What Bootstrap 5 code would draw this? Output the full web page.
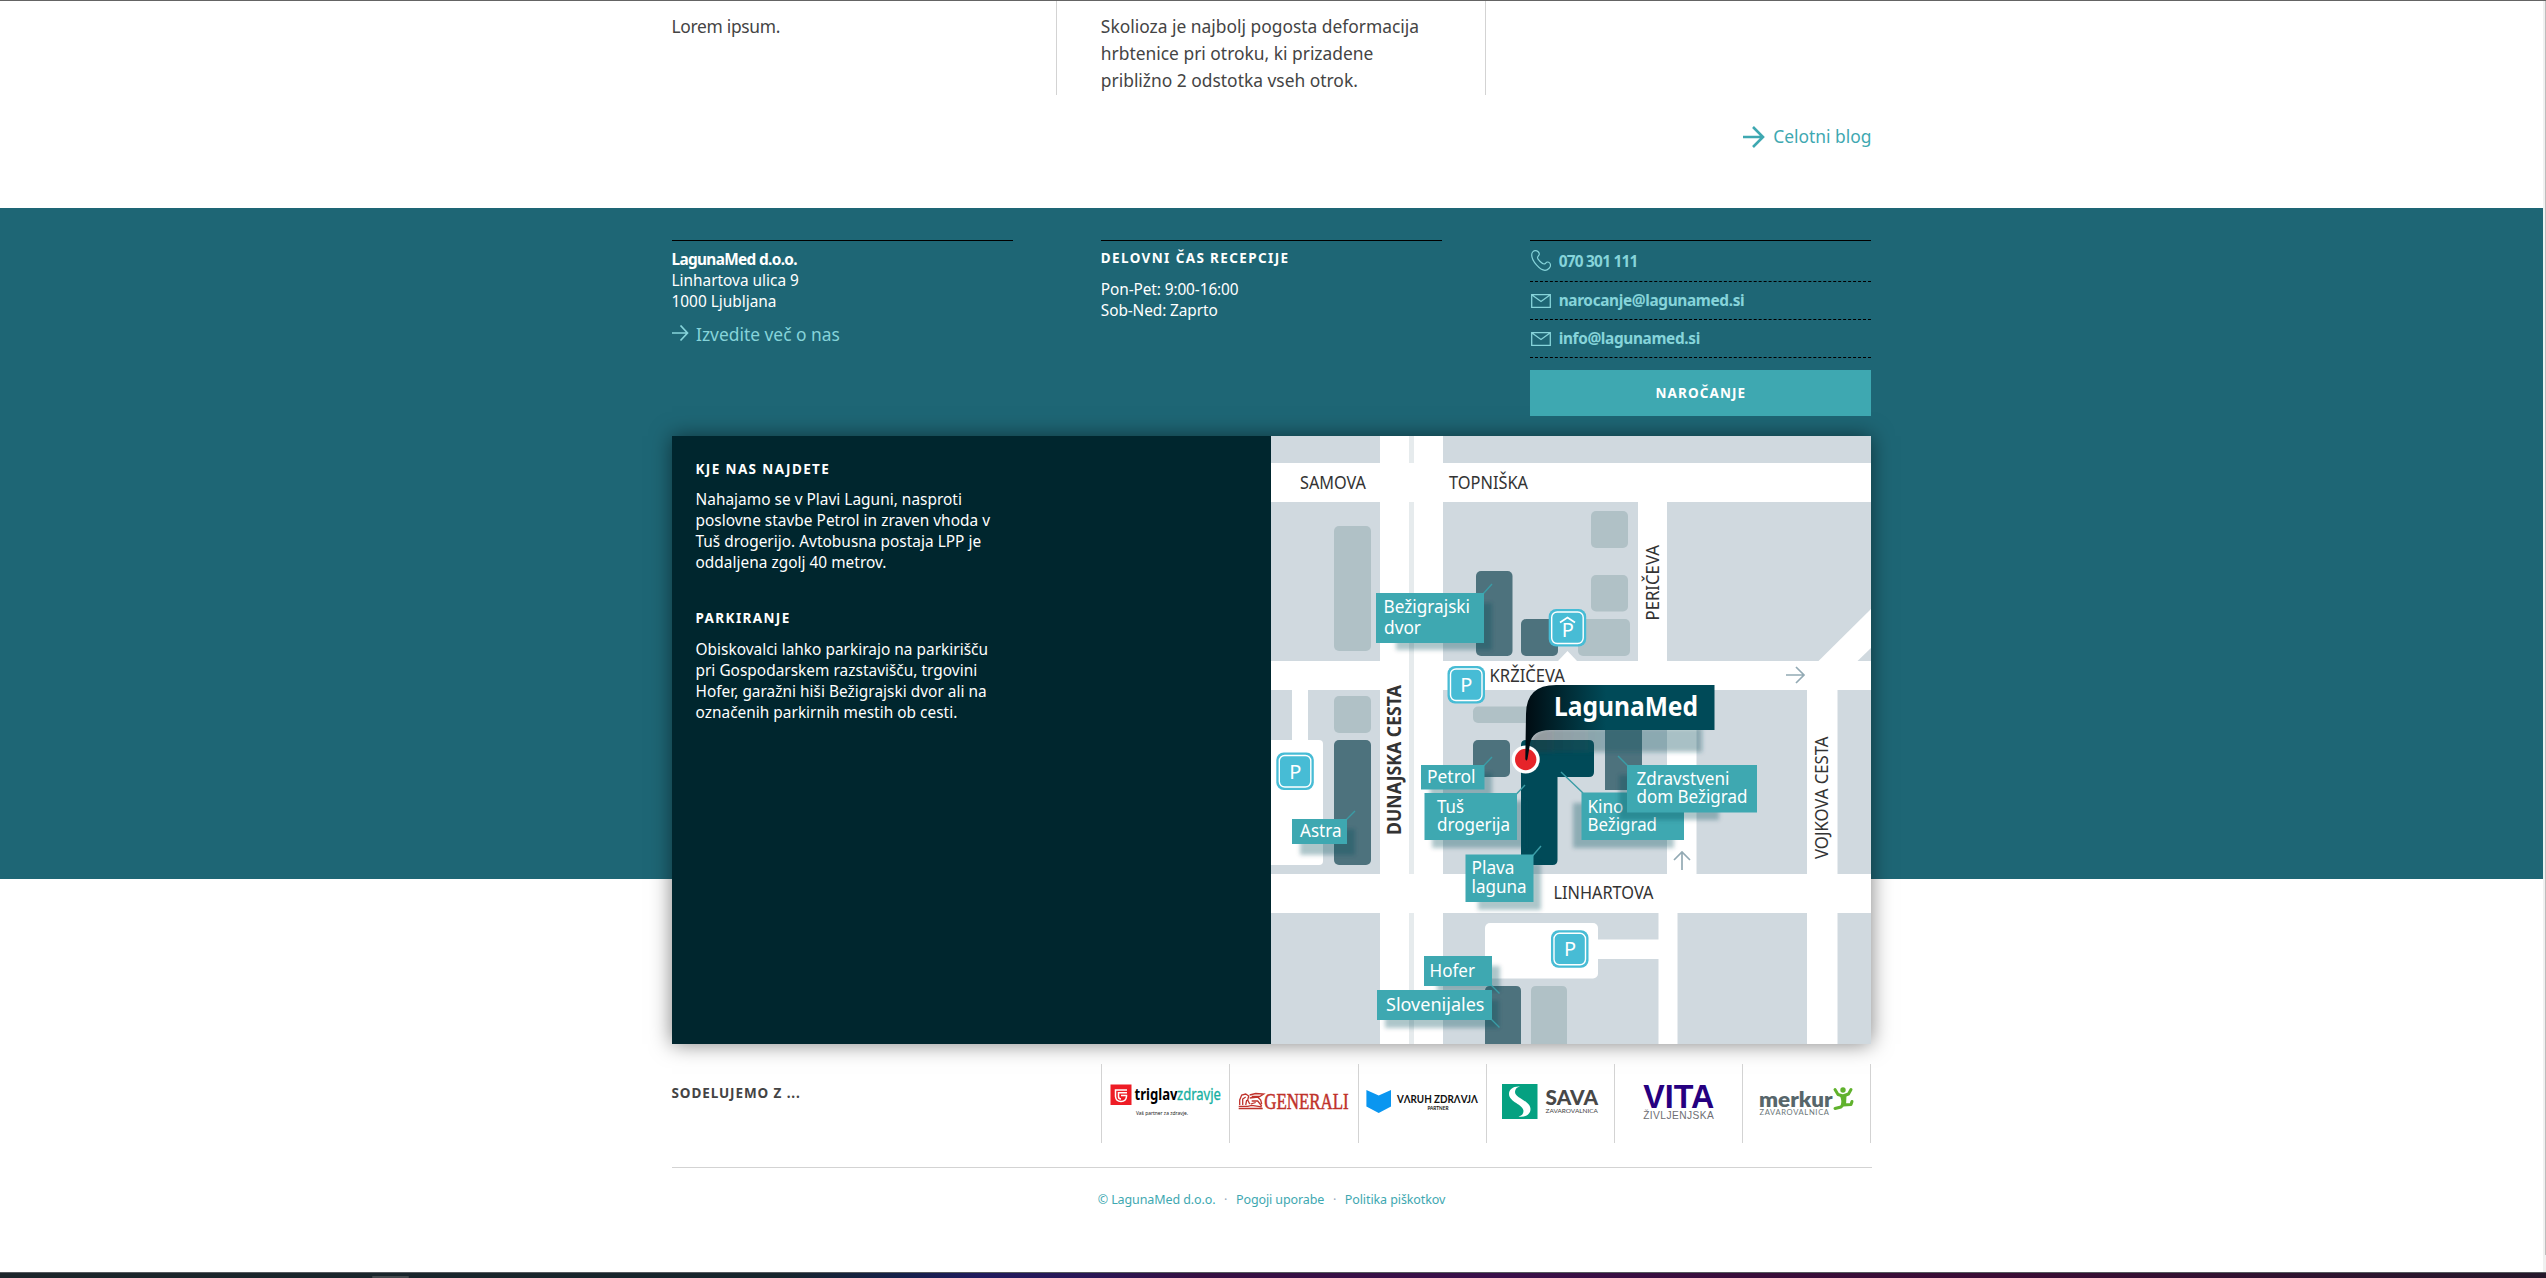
<!DOCTYPE html>
<html lang="sl">
<head>
<meta charset="utf-8">
<meta name="viewport" content="width=device-width, initial-scale=1">
<title>LagunaMed</title>
<link href="https://cdn.jsdelivr.net/npm/bootstrap@5.3.0/dist/css/bootstrap.min.css" rel="stylesheet">
<style>
html,body{height:1278px;overflow:hidden}
body{font-family:"Noto Sans","Open Sans",sans-serif;background:#fff;color:#444;font-size:15.4px;line-height:21px}
a{text-decoration:none;color:#3ea8b1}
.topline{height:1px;background:#646464}
.viewarea{height:1271px}
.scroller{width:3px;background:#f0f0f0;padding-left:2px}
.thumb{height:1254px;background:#bdbdbd}
.wrap{width:1200px;margin:0 auto}
.cols{display:grid;grid-template-columns:repeat(3,341.33px);column-gap:88px}
.blog{height:207px;font-size:17.4px;line-height:27px}
.post{height:94px;padding-top:11.7px;white-space:nowrap}
.post:not(:last-child){border-right:1px solid #d3d3d3;width:385.3px}
.short{letter-spacing:-.3px}
.more{margin-top:28.4px}
.foot{background:linear-gradient(#1e6675 671px,#fff 671px);padding-top:32px;height:1063px}
.fcol{border-top:1px solid #000;height:196px;color:#fff;white-space:nowrap}
.addr{padding-top:7.5px}
.firm{letter-spacing:-.67px}
.hours{padding-top:11.5px;letter-spacing:-.1px}
.about{margin-top:9.3px;font-size:17.4px;line-height:27px;gap:7.5px}
.hd{font-weight:700;font-size:13.5px;line-height:18px;letter-spacing:1.38px;color:#fff;margin:0}
.fcol .hd{padding-top:8px}
.foot .mint,.foot .mint a{color:#86d4da}
.crow{border-bottom:1px dashed #000;height:38px;font-weight:700;gap:8px;padding-left:.5px;letter-spacing:-.36px}
.crow:first-child{height:41px}
.phone{letter-spacing:-.75px}
.btn-order{height:46px;margin-top:12px;background:#3ea8b1;border-radius:0;color:#fff;font-weight:700;font-size:13.5px;letter-spacing:1.1px}
.where{width:1199.5px;height:608px;box-shadow:0 0 20px rgba(0,0,0,.5);background:#00262e}
.info{width:599.5px;padding:23.6px 24px;color:#fff;white-space:nowrap}
.para{margin-top:11.9px;letter-spacing:.025px}
.hd2{margin-top:36px}
.partners{margin-top:20px;height:79px}
.sod{color:#444;letter-spacing:.9px;margin-top:19.6px}
.logos{width:770px;margin-left:auto;margin-right:.6px}
.logo{width:128.3px;height:79px;border-left:1px solid #d3d3d3}
.logo:last-child{border-right:1px solid #d3d3d3}
.logo svg{display:block;overflow:visible}
.legal{border-top:1px solid #d3d3d3;margin-top:24px;padding-top:21.6px;font-size:12.5px;line-height:20px;letter-spacing:-.1px}
.dotsep{width:20.5px;text-align:center;color:#9ab}
.dock{height:6px;border-top:1px solid #565a5e;background:linear-gradient(90deg,#1c252a 0,#17252c 780px,#15204a 900px,#201a5e 980px,#2a1656 1090px,#360f42 1200px,#3a0f4a 1500px,#390d3a 1750px,#3b0c35 2000px,#26182b 2546px)}
.dockmark{width:37px;height:2px;margin:3px 0 0 372px;background:#43494d;border-radius:1px}
text{font-family:"Noto Sans","Open Sans",sans-serif}
.lb{fill:#fff;font-size:17.4px}
.st{fill:#333;font-size:17.4px}
.ll{stroke:#3a9ca6;stroke-width:1.4}
.sh{fill:#0e4a57;fill-opacity:.32;filter:url(#soft)}
.bx{fill:#3ea8b1}
.lt{fill:#b0c1c6}
.dk{fill:#4d727d}
.avenue{font-size:19.6px;font-weight:700}
.pks{fill:#fff;font-size:20px}
.lato text,text.lato{font-family:Lato,sans-serif}
.arial text{font-family:"Liberation Sans",Arial,sans-serif}
.times text{font-family:"Liberation Serif","Times New Roman",serif}
</style>
</head>
<body class="d-flex flex-column">
<div class="topline"></div>
<div class="viewarea d-flex">
<main class="flex-grow-1">
  <section class="blog">
    <div class="wrap">
      <div class="cols">
        <div class="post short">Lorem ipsum.</div>
        <div class="post">Skolioza je najbolj pogosta deformacija<br>hrbtenice pri otroku, ki prizadene<br>približno 2 odstotka vseh otrok.</div>
        <div class="post"></div>
      </div>
      <div class="more d-flex justify-content-end align-items-center">
        <svg width="22" height="24" viewBox="0 0 22 24" class="me-2" fill="none" stroke="#3ea8b1" stroke-width="2.6"><path d="M0 12h20M10 2l10 10-10 10"/></svg>
        <a href="#">Celotni blog</a>
      </div>
    </div>
  </section>
  <footer class="foot">
    <div class="wrap">
      <div class="cols">
        <div class="fcol">
          <div class="addr"><b class="firm">LagunaMed d.o.o.</b><br>Linhartova ulica 9<br>1000 Ljubljana</div>
          <div class="mint about d-flex align-items-center"><svg width="17" height="18" viewBox="0 0 17 18" fill="none" stroke="#86d4da" stroke-width="1.7"><path d="M0 8h15.500M8.500.500l7 7.500-7 7.500"/></svg><a href="#">Izvedite več o nas</a></div>
        </div>
        <div class="fcol">
          <h6 class="hd">DELOVNI ČAS RECEPCIJE</h6>
          <div class="hours">Pon-Pet: 9:00-16:00<br>Sob-Ned: Zaprto</div>
        </div>
        <div class="fcol mint">
          <div class="crow d-flex align-items-center"><svg width="20" height="22" viewBox="0 0 20 22" fill="none" stroke="#86d4da" stroke-width="1.2"><path d="M.700 5C.700 2.500 2.500.700 4.500.700S8.300 2.500 8.300 4 6.500 6.300 6.500 7.800s4.800 6.200 6.500 6.200 1.700-2 3.500-2 3 2 3 3.500-2.500 4.800-5.500 4.800C9 20.300.700 11 .700 5z"/></svg><a href="#" class="phone">070 301 111</a></div>
          <div class="crow d-flex align-items-center"><svg width="20" height="14" viewBox="0 0 20 14" fill="none" stroke="#86d4da" stroke-width="1.3"><path d="M.700.700h18.600v12.600H.700zM.700.700L10 7.500 19.300.700"/></svg><a href="#">narocanje@lagunamed.si</a></div>
          <div class="crow d-flex align-items-center"><svg width="20" height="14" viewBox="0 0 20 14" fill="none" stroke="#86d4da" stroke-width="1.3"><path d="M.700.700h18.600v12.600H.700zM.700.700L10 7.500 19.300.700"/></svg><a href="#">info@lagunamed.si</a></div>
          <button class="btn btn-order w-100 d-flex justify-content-center align-items-center">NAROČANJE</button>
        </div>
      </div>
      <div class="where d-flex">
        <div class="info">
          <h6 class="hd">KJE NAS NAJDETE</h6>
          <div class="para">Nahajamo se v Plavi Laguni, nasproti<br>poslovne stavbe Petrol in zraven vhoda v<br>Tuš drogerijo. Avtobusna postaja LPP je<br>oddaljena zgolj 40 metrov.</div>
          <h6 class="hd hd2">PARKIRANJE</h6>
          <div class="para">Obiskovalci lahko parkirajo na parkirišču<br>pri Gospodarskem razstavišču, trgovini<br>Hofer, garažni hiši Bežigrajski dvor ali na<br>označenih parkirnih mestih ob cesti.</div>
        </div>
        <svg width="600" height="608" viewBox="1271 436 600 608">
          <defs>
            <filter id="soft" x="-20%" y="-30%" width="140%" height="160%"><feGaussianBlur stdDeviation="2"/></filter>
            <linearGradient id="tag" gradientUnits="userSpaceOnUse" x1="1526" y1="0" x2="1606" y2="0"><stop offset="0" stop-color="#000c12"/><stop offset="1" stop-color="#004a58"/></linearGradient>
            <linearGradient id="tagsh" gradientUnits="userSpaceOnUse" x1="1530" y1="0" x2="1610" y2="0"><stop offset="0" stop-color="#333"/><stop offset="1" stop-color="#1a5a66"/></linearGradient>
            <g id="pk"><rect width="37.500" height="37.500" rx="7.500" fill="#47bcd5"/><rect x="3" y="3" width="31.500" height="31.500" rx="5.500" fill="none" stroke="#fff" stroke-width="1.400"/></g>
          </defs>
          <rect x="1271" y="436" width="601" height="608" fill="#d0d9df"/>
          <g fill="#fff">
            <rect x="1380" y="436" width="63" height="608"/>
            <rect x="1271" y="463" width="601" height="39"/>
            <rect x="1271" y="661" width="601" height="29"/>
            <rect x="1271" y="874" width="601" height="39"/>
            <rect x="1292" y="690" width="16" height="52"/>
            <path d="M1271 740h48q4 0 4 4v117q0 4-4 4h-48z"/>
            <rect x="1638" y="502" width="29" height="160"/>
            <path d="M1818 661.500L1872 608v39l-15 14.500z"/>
            <rect x="1807" y="690" width="30.500" height="354"/>
            <rect x="1667" y="690" width="29.500" height="185"/>
            <rect x="1658.500" y="913" width="19" height="131"/>
            <rect x="1485" y="923" width="113" height="55.500" rx="5"/>
            <rect x="1597" y="939.500" width="62" height="19.500"/>
            <path d="M1557.500 661.500l10-10.500 10 10.500z"/>
          </g>
          <path d="M1409 436h5v27h-5zM1409 502h5v372h-5zM1409 913h5v131h-5z" fill="#e6ebed"/>
          <g class="lt">
            <rect x="1334" y="526" width="37" height="125" rx="5"/><rect x="1334" y="696" width="37" height="37" rx="5"/>
            <rect x="1591" y="511" width="37" height="37" rx="5"/><rect x="1591" y="575" width="37" height="36.500" rx="5"/><rect x="1578" y="619" width="52" height="37" rx="5"/>
            <rect x="1473" y="706.500" width="80" height="16.500" rx="5"/><path d="M1531 1044v-53q0-5 5-5h26q5 0 5 5v53z"/>
          </g>
          <g class="dk">
            <rect x="1334" y="740" width="37" height="125" rx="5"/><rect x="1476" y="571" width="36.500" height="85" rx="5"/><rect x="1521" y="619" width="37" height="37" rx="5"/>
            <rect x="1473" y="740" width="37" height="37" rx="5"/><rect x="1605" y="700" width="37" height="90"/><path d="M1485 1044v-53q0-5 5-5h26q5 0 5 5v53z"/>
          </g>
          <path d="M1526 740h63q5 0 5 5v27q0 5-5 5h-31.500v83q0 5-5 5H1526q-5 0-5-5V745q0-5 5-5z" fill="#004a58"/>

          <g fill="none" stroke="#93aab4" stroke-width="1.700"><path d="M1786 675h17.500M1796 667l8 8-8 8M1682 870v-17M1674 860l8-8 8 8"/></g>

          <g class="st">
            <text x="1300" y="489.300" textLength="66" lengthAdjust="spacingAndGlyphs">SAMOVA</text>
            <text x="1449" y="489.300" textLength="79" lengthAdjust="spacingAndGlyphs">TOPNIŠKA</text>
            <text x="1489.500" y="681.700" textLength="75.500" lengthAdjust="spacingAndGlyphs">KRŽIČEVA</text>
            <text x="1553.500" y="898.700" textLength="100" lengthAdjust="spacingAndGlyphs">LINHARTOVA</text>
            <text transform="translate(1659 620.500) rotate(-90)" textLength="75.500" lengthAdjust="spacingAndGlyphs">PERIČEVA</text>
            <text transform="translate(1827.700 859) rotate(-90)" textLength="122.500" lengthAdjust="spacingAndGlyphs">VOJKOVA CESTA</text>
            <text class="avenue" transform="translate(1401 835) rotate(-90)" textLength="150" lengthAdjust="spacingAndGlyphs">DUNAJSKA CESTA</text>
          </g>

          <g class="sh">
            <rect x="1396" y="603" width="96" height="47"/><rect x="1430" y="773" width="62" height="25"/><rect x="1432" y="801" width="93" height="47"/>
            <rect x="1478" y="863" width="63" height="47"/><rect x="1300" y="829" width="55" height="26"/>
            <rect x="1437" y="966" width="63" height="26"/><rect x="1385" y="1000" width="114" height="28"/><rect x="1573" y="803" width="101" height="45"/>
          </g>
          <path d="M1530 752V744q3-16 22-16H1702v24z" fill="url(#tagsh)" fill-opacity=".38" filter="url(#soft)"/>
          <g class="ll"><path d="M1483 594l9-10M1483.500 766l8.500-9M1516.500 794l8.500-9M1532.500 856l8.500-10M1346 820l9-9M1491 985l8.500 8.500M1491 1019l8.500 8.500M1561 772l22 21"/></g>
          <g class="bx">
            <rect x="1376" y="593" width="108" height="50"/><rect x="1421" y="765" width="63.500" height="24.500"/><rect x="1424.500" y="793" width="92.500" height="47"/>
            <rect x="1465.500" y="854.500" width="68" height="47.500"/><rect x="1292" y="819" width="55" height="25"/><rect x="1424" y="956" width="68" height="30"/>
            <rect x="1377" y="990" width="115" height="30"/><rect x="1581.500" y="792.500" width="102.500" height="47.500"/>
          </g>
          <g class="lb">
            <text x="1383.500" y="612.700" textLength="86.500" lengthAdjust="spacingAndGlyphs">Bežigrajski</text><text x="1384" y="634" textLength="37" lengthAdjust="spacingAndGlyphs">dvor</text>
            <text x="1427" y="782.700" textLength="48.500" lengthAdjust="spacingAndGlyphs">Petrol</text>
            <text x="1437" y="812.700" textLength="27" lengthAdjust="spacingAndGlyphs">Tuš</text><text x="1437" y="831" textLength="73" lengthAdjust="spacingAndGlyphs">drogerija</text>
            <text x="1471.500" y="874.300" textLength="43" lengthAdjust="spacingAndGlyphs">Plava</text><text x="1471.500" y="892.500" textLength="55" lengthAdjust="spacingAndGlyphs">laguna</text>
            <text x="1300" y="837.300" textLength="41.500" lengthAdjust="spacingAndGlyphs">Astra</text>
            <text x="1429.500" y="976.700" textLength="45.500" lengthAdjust="spacingAndGlyphs">Hofer</text>
            <text x="1386" y="1011.300" textLength="98.500" lengthAdjust="spacingAndGlyphs">Slovenijales</text>
            <text x="1587.500" y="812.700" textLength="36" lengthAdjust="spacingAndGlyphs">Kino</text><text x="1587.500" y="830.500" textLength="69.500" lengthAdjust="spacingAndGlyphs">Bežigrad</text>
          </g>
          <rect class="sh" x="1619" y="775" width="100" height="45"/>
          <path class="ll" d="M1618 756l10 10"/>
          <rect class="bx" x="1627" y="765" width="130" height="47.500"/>
          <g class="lb"><text x="1636.500" y="784.700" textLength="93" lengthAdjust="spacingAndGlyphs">Zdravstveni</text><text x="1636.500" y="803" textLength="111" lengthAdjust="spacingAndGlyphs">dom Bežigrad</text></g>

          <circle cx="1525.700" cy="759.500" r="14" fill="#fff"/><circle cx="1525.700" cy="759.500" r="10.700" fill="#e62429"/>
          <path d="M1714.500 685H1556Q1526 685 1526 714L1525.300 759q1.200 3 2.200 0L1530 744Q1532 730 1550 730H1714.500z" fill="url(#tag)"/>
          <text x="1554" y="716.300" textLength="144" lengthAdjust="spacingAndGlyphs" fill="#fff" font-weight="700" font-size="27">LagunaMed</text>

          <use href="#pk" x="1447.500" y="666"/><use href="#pk" x="1548.700" y="609"/><use href="#pk" x="1276.300" y="752.500"/><use href="#pk" x="1551" y="930.300"/>
          <g class="pks" text-anchor="middle"><text x="1466.300" y="691.500">P</text><text x="1567.800" y="637.200">P</text><text x="1295.200" y="778.500">P</text><text x="1570" y="956">P</text></g>
          <path d="M1560 622.500l7.500-5 7.500 5" fill="none" stroke="#fff" stroke-width="1.800"/>
        </svg>
      </div>
      <div class="partners d-flex">
        <h6 class="hd sod">SODELUJEMO Z ...</h6>
        <div class="logos d-flex">
          <div class="logo"><svg width="127" height="79" viewBox="1102 1064 127 79">
            <rect x="1110.500" y="1084.500" width="21" height="20.500" fill="#ee1c25"/><path d="M1127 1090h-11.500v6.500q.500 5 5.500 5t5.500-5v-1h-5.500M1127 1092.800h-8.500v3.700q0 2.500 2.500 2.500" fill="none" stroke="#fff" stroke-width="1.500"/>
            <text x="1134.500" y="1100" font-size="15.500" font-weight="700" fill="#000" textLength="43" lengthAdjust="spacingAndGlyphs">triglav</text><text x="1177" y="1100" font-size="15.500" fill="#17b0a2" stroke="#17b0a2" stroke-width=".3" textLength="44" lengthAdjust="spacingAndGlyphs">zdravje</text>
            <text x="1136" y="1115" font-size="5.500" fill="#222" textLength="52" lengthAdjust="spacingAndGlyphs">Vaš partner za zdravje.</text></svg></div>
          <div class="logo times"><svg width="127" height="79" viewBox="1230.300 1064 127 79">
            <g fill="none" stroke="#c0322b" stroke-width="1.300"><path d="M1239 1108.500h24M1239 1106.300h9l4-1 10 1.500M1240 1105v-5l2-5 4-1 3 2-1 4 2 4M1243 1105v-6l3-2M1246 1105l1-5M1250 1095l6-1.500 8 .500-4 2.500h-8M1250 1098l8-1 3 3 1 4M1252 1101h6l4 5M1251 1104l5-1.500"/></g>
            <text x="1264.500" y="1109" font-size="22.500" fill="#c0322b" stroke="#c0322b" stroke-width=".5" textLength="84.500" lengthAdjust="spacingAndGlyphs">GENERALI</text></svg></div>
          <div class="logo lato"><svg width="127" height="79" viewBox="1358.600 1064 127 79">
            <path d="M1366 1090l12.300 5.500 12.300-5.500v16.500l-12.300 6.500-12.300-6.500z" fill="#0a96f0"/>
            <text x="1396.500" y="1103" font-size="11" font-weight="700" fill="#111" textLength="81" lengthAdjust="spacingAndGlyphs">VΛRUH ZDRΛVJΛ</text><text x="1427" y="1110" font-size="4.800" font-weight="700" fill="#111" textLength="21" lengthAdjust="spacingAndGlyphs">PARTNER</text></svg></div>
          <div class="logo lato"><svg width="127" height="79" viewBox="1487 1064 127 79">
            <rect x="1502" y="1084" width="35.500" height="35" fill="#05a181"/><path d="M1520 1086.500c-7-.500-11 3-11 7.500 0 8 14.500 10.500 14.500 17 0 3-2 5-5 5.500 7 1 12-2 12-7.500 0-8-15.500-11-15.500-17 0-3 2-5 5-5.500z" fill="#fff"/>
            <text x="1545.500" y="1105" font-size="20.500" font-weight="900" fill="#484848" textLength="52.500" lengthAdjust="spacingAndGlyphs">SAVA</text><text x="1545.500" y="1112.700" font-size="6.400" fill="#444" textLength="52.500" lengthAdjust="spacingAndGlyphs">ZAVAROVALNICA</text></svg></div>
          <div class="logo arial"><svg width="127" height="79" viewBox="1615.300 1064 127 79">
            <text x="1643.500" y="1107.500" font-size="33" font-weight="700" fill="#260080" textLength="71" lengthAdjust="spacingAndGlyphs">VITA</text><text x="1643.500" y="1119" font-size="10.200" fill="#6e6e73" textLength="70.500">ŽIVLJENJSKA</text></svg></div>
          <div class="logo lato"><svg width="127" height="79" viewBox="1743.500 1064 127 79">
            <text x="1759.500" y="1106.500" font-size="21.500" font-weight="800" fill="#57666b" textLength="73.500" lengthAdjust="spacingAndGlyphs">merkur</text><text x="1760" y="1115" font-size="7.600" fill="#6b7679" textLength="69.500">ZAVAROVALNICA</text>
            <g fill="none" stroke="#60b22d" stroke-width="3" stroke-linecap="round" stroke-linejoin="round"><path d="M1835.500 1089.500l3 5 5 1.500 5.500-2 2.500-4.500M1843.500 1105l8-.500 1-3M1843 1105.500l-1.500 1.500-6 1.500"/></g><path d="M1840 1095h7l-.500 11h-5.500q2-5-1-11z" fill="#60b22d"/><circle cx="1843.500" cy="1090" r="2.700" fill="#60b22d"/></svg></div>
        </div>
      </div>
      <div class="legal d-flex justify-content-center">
        <a href="#">© LagunaMed d.o.o.</a><span class="dotsep">·</span><a href="#">Pogoji uporabe</a><span class="dotsep">·</span><a href="#">Politika piškotkov</a>
      </div>
    </div>
  </footer>
</main>
<div class="scroller"><div class="thumb"></div></div>
</div>
<div class="dock"><div class="dockmark"></div></div>
<script src="https://cdn.jsdelivr.net/npm/bootstrap@5.3.0/dist/js/bootstrap.bundle.min.js"></script>
</body>
</html>
